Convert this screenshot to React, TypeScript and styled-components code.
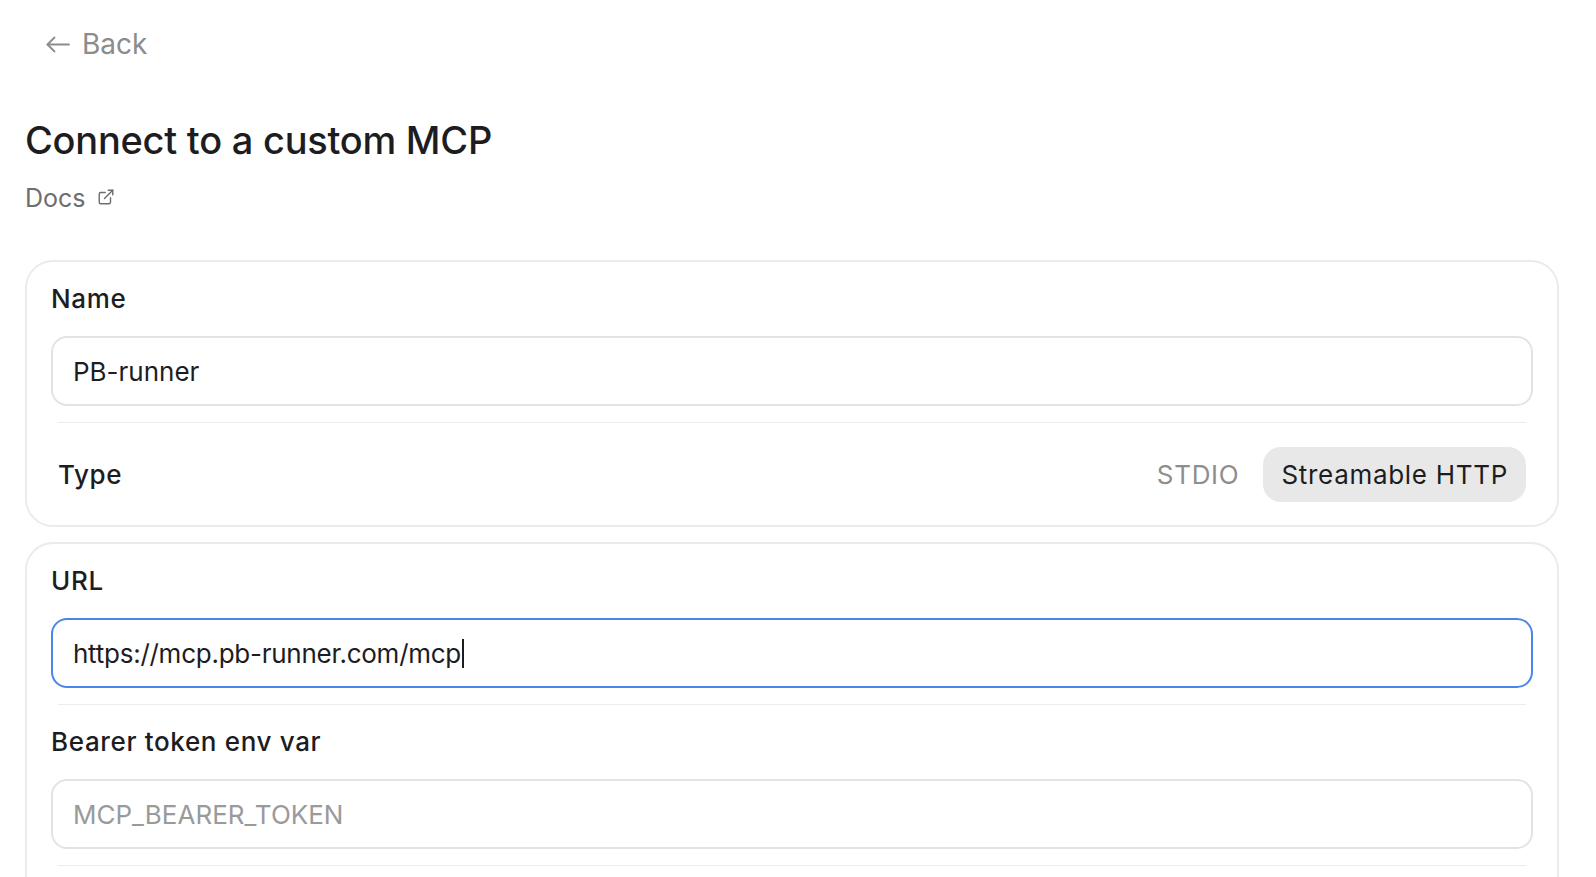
import React from 'react';
import styled, { createGlobalStyle } from 'styled-components';
import { ExternalLink } from 'lucide-react';

const GlobalStyle = createGlobalStyle`
  html, body {
    margin: 0;
    padding: 0;
    background: #ffffff;
  }
  body {
    font-family: Inter, "Noto Sans", "Liberation Sans", sans-serif;
    color: #1d1d1f;
    -webkit-font-smoothing: antialiased;
  }
  * { box-sizing: border-box; }
`;

const Page = styled.div`
  display: flex;
  flex-direction: column;
  align-items: flex-start;
  padding: 27px 37px 40px 25px;
  min-height: 100vh;
`;

const BackButton = styled.button`
  display: inline-flex;
  align-items: center;
  gap: 12px;
  margin-left: 21px;
  padding: 0;
  border: none;
  background: none;
  font: inherit;
  font-size: 28px;
  line-height: 34px;
  color: #8c8c8c;
  cursor: pointer;
`;

const Title = styled.h1`
  margin: 57px 0 0;
  font-size: 38px;
  line-height: 44px;
  font-weight: 500;
  letter-spacing: -0.25px;
  color: #1d1d1f;
`;

const DocsLink = styled.a`
  display: inline-flex;
  align-items: center;
  gap: 11px;
  margin-top: 21px;
  font-size: 25px;
  line-height: 30px;
  color: #6e6e6e;
  text-decoration: none;
  cursor: pointer;

  svg {
    margin-top: -3px;
  }
`;

const Cards = styled.div`
  align-self: stretch;
  display: flex;
  flex-direction: column;
  gap: 15px;
  margin-top: 47px;
`;

const Card = styled.section`
  display: flex;
  flex-direction: column;
  border: 2px solid #ebebeb;
  border-radius: 28px;
  padding: 21px 24px 23px;
`;

const Field = styled.div`
  display: flex;
  flex-direction: column;
  gap: 21px;
`;

const Label = styled.label`
  font-size: 26px;
  line-height: 32px;
  font-weight: 500;
  letter-spacing: 0.65px;
  color: #1d1d1f;
`;

const TextBox = styled.div<{ $focused?: boolean }>`
  display: flex;
  align-items: center;
  height: 70px;
  padding: 0 20px;
  border: 2px solid ${p => (p.$focused ? '#4a86ea' : '#e3e3e3')};
  border-radius: 16px;
  font-size: 26px;
  letter-spacing: ${p => (p.$focused ? '-0.25px' : '0')};
  color: #1d1d1f;
  background: #fff;
`;

const Placeholder = styled.span`
  color: #9a9a9a;
`;

const Caret = styled.span`
  display: inline-block;
  width: 1.5px;
  height: 29px;
  margin-left: 1px;
  background: #1d1d1f;
`;

const Divider = styled.hr`
  margin: 16px 7px 21px;
  border: none;
  border-top: 1px solid #ececec;
`;

const TypeRow = styled.div`
  display: flex;
  align-items: center;
  justify-content: space-between;
  margin-top: 3px;
  padding: 0 7px;
`;

const Segmented = styled.div`
  display: flex;
  align-items: center;
  gap: 6px;
`;

const Segment = styled.button<{ $active?: boolean }>`
  height: 55px;
  padding: 0 18px;
  border: none;
  border-radius: 18px;
  font: inherit;
  font-size: 26px;
  letter-spacing: 0.7px;
  color: ${p => (p.$active ? '#1d1d1f' : '#8e8e8e')};
  background: ${p => (p.$active ? '#e8e8e8' : 'transparent')};
  cursor: pointer;
`;

// thin left arrow, wider than it is tall
const BackArrow = () => (
  <svg width="24" height="17" viewBox="0 0 24 17" fill="none" stroke="currentColor"
    strokeWidth="1.8" strokeLinecap="round" strokeLinejoin="round">
    <path d="M23 8.5H1.5" />
    <path d="M8.5 1.5 1.5 8.5l7 7" />
  </svg>
);

const types = ['STDIO', 'Streamable HTTP'];

export default function App() {
  const activeType = 'Streamable HTTP';

  return (
    <>
      <GlobalStyle />
      <Page>
        <BackButton>
          <BackArrow />
          Back
        </BackButton>

        <Title>Connect to a custom MCP</Title>
        <DocsLink>
          Docs
          <ExternalLink size={18} strokeWidth={1.9} />
        </DocsLink>

        <Cards>
          <Card>
            <Field>
              <Label>Name</Label>
              <TextBox>PB-runner</TextBox>
            </Field>
            <Divider />
            <TypeRow>
              <Label as="span">Type</Label>
              <Segmented>
                {types.map(t => (
                  <Segment key={t} $active={t === activeType}>
                    {t}
                  </Segment>
                ))}
              </Segmented>
            </TypeRow>
          </Card>

          <Card>
            <Field>
              <Label>URL</Label>
              <TextBox $focused>
                https://mcp.pb-runner.com/mcp
                <Caret />
              </TextBox>
            </Field>
            <Divider />
            <Field>
              <Label>Bearer token env var</Label>
              <TextBox>
                <Placeholder>MCP_BEARER_TOKEN</Placeholder>
              </TextBox>
            </Field>
            <Divider />
          </Card>
        </Cards>
      </Page>
    </>
  );
}
